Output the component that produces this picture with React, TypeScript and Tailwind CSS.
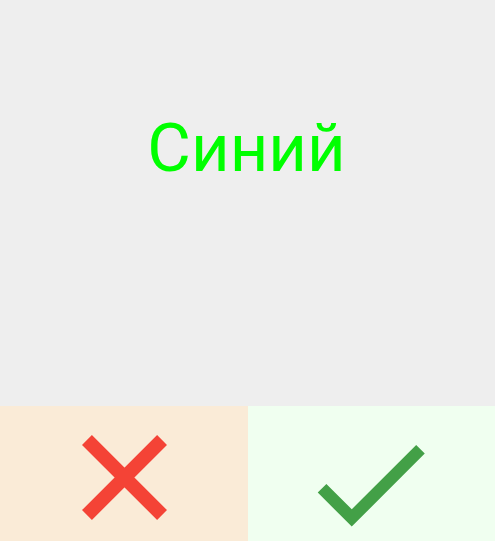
import React from 'react';
import { MdCheck } from 'react-icons/md';

export default function App() {
  return (
    <div className="w-[495px] h-[541px] flex flex-col overflow-hidden" style={{ fontFamily: 'Roboto, "Noto Sans", sans-serif' }}>
      <div className="h-[406px] bg-[#eeeeee] flex justify-center">
        <span className="mt-[115px] ml-[-2px] text-[67px] leading-[67px] text-[#00ff00]">Синий</span>
      </div>
      <div className="flex h-[135px]">
        <div className="w-[248px] bg-[#faebd7] flex justify-center items-start overflow-hidden">
          {/* cross, a bit heavier than the material one */}
          <svg className="mt-[29px] shrink-0" width={85} height={85} viewBox="0 0 85 85">
            <path d="M4.95 4.95L80.05 80.05M80.05 4.95L4.95 80.05" stroke="#f44336" strokeWidth={14} fill="none" />
          </svg>
        </div>
        <div className="flex-1 bg-[#f0fff0] flex justify-center overflow-hidden">
          <MdCheck className="shrink-0 mt-[5px] -ml-[3px] text-[#43a047]" size={146} />
        </div>
      </div>
    </div>
  );
}
